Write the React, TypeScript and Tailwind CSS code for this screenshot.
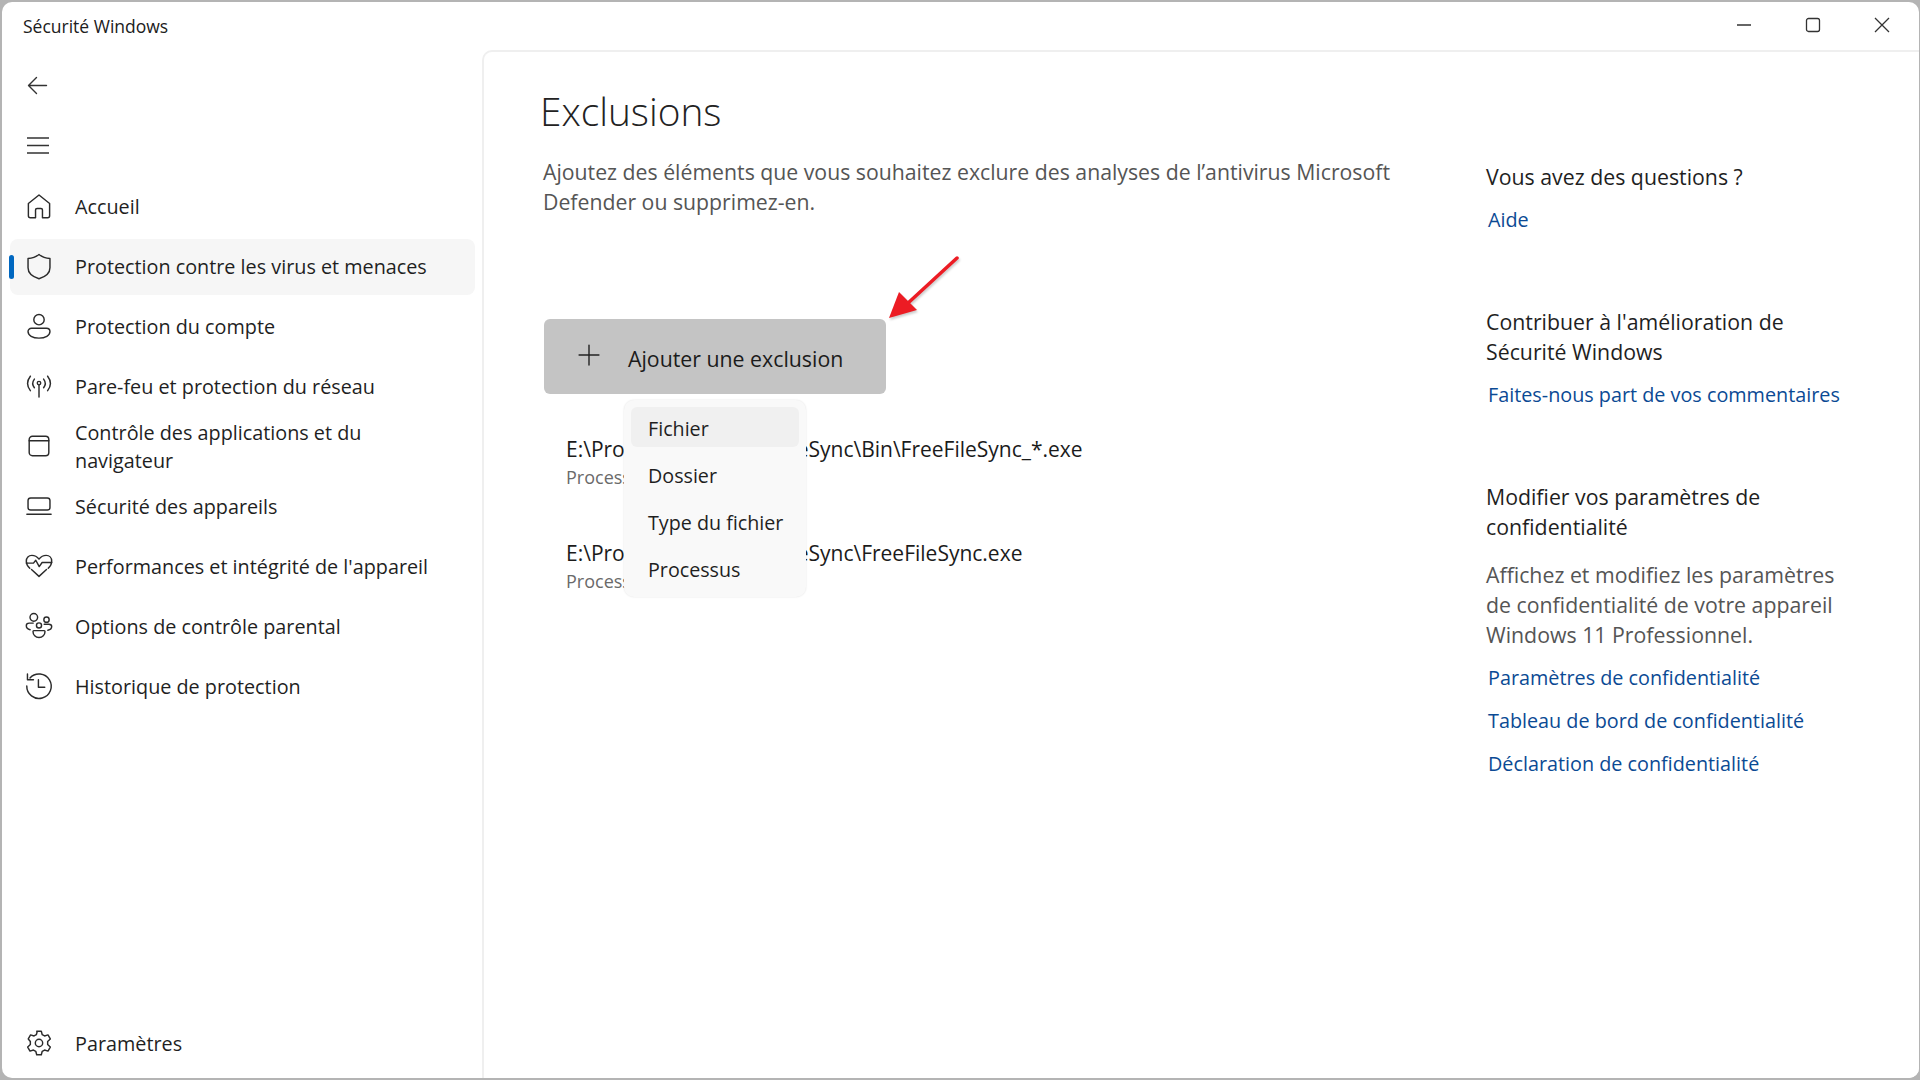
import { Plus } from "lucide-react";

const stroke = { fill: "none", stroke: "#2b2b2b", strokeWidth: 1.25, strokeLinecap: "round", strokeLinejoin: "round" } as const;

const icons = {
  home: <path d="M13 3.500 3.800 10.800v10.700c0 1 .7 1.700 1.700 1.700H10v-6.700c0-.8.5-1.300 1.300-1.300h3.400c.8 0 1.300.5 1.300 1.300v6.700h4.500c1 0 1.700-.7 1.700-1.700V10.800L13 3.500Z" />,
  shield: (
    <path d="M13 3c2.800 2.200 5.700 3.300 9.500 3.500v8c0 4.500-3 7.500-9.500 9.500-6.500-2-9.500-5-9.500-9.500v-8C7.300 6.300 10.200 5.200 13 3Z" />
  ),
  person: (
    <>
      <circle cx="13" cy="7.500" r="4.500" />
      <path d="M6.500 15h13c1.700 0 3 1.200 3 2.800 0 3.400-4 5.700-9.500 5.700s-9.500-2.300-9.500-5.700c0-1.600 1.300-2.800 3-2.800Z" />
    </>
  ),
  wifi: (
    <>
      <circle cx="13" cy="10.500" r="1.500" />
      <path d="M13 12.500v10" />
      <path d="M9 7c-1.700 2.200-1.700 5.300 0 7.500M17 7c1.700 2.200 1.700 5.300 0 7.500" />
      <path d="M5.500 4.500c-3 3.900-3 8.600 0 12.500M20.500 4.500c3 3.900 3 8.600 0 12.500" />
    </>
  ),
  app: (
    <>
      <rect x="4.500" y="4.500" width="17" height="17" rx="2.800" />
      <path d="M4.500 8.500h17" />
    </>
  ),
  laptop: (
    <>
      <rect x="3.500" y="6" width="19" height="10.500" rx="2.300" />
      <path d="M2.500 20.200h21" />
    </>
  ),
  heart: (
    <>
      <path d="M5 15C2.800 12.800 2 11 2 8.800 2 5.800 4 3.800 6.800 3.800c2.500 0 4.600 1.200 6.200 3.200 1.600-2 3.700-3.200 6.200-3.200C22 3.800 24 5.800 24 8.800c0 2.200-.8 4-3 6.200" />
      <path d="M2 10.500h6.200l2-2.500 3 5.500 2.500-3.500H24" />
      <path d="m6.500 16 6.500 6 6.500-6" />
    </>
  ),
  family: (
    <>
      <circle cx="8.500" cy="5.500" r="3.300" />
      <circle cx="19.500" cy="7.500" r="2.300" />
      <circle cx="13" cy="12.500" r="2.200" />
      <path d="M8 10.500H4.500c-1.500 0-2.500.9-2.500 2.200 0 1.700 1.200 3 3.300 3.500" />
      <path d="M17.500 11.500h4c1.500 0 2.500.8 2.500 2 0 1.600-1.200 2.800-3.300 3.200" />
      <path d="M8.500 17h9c.4 0 .7.300.7.700 0 3-2.200 5.300-5.200 5.300s-5.200-2.300-5.200-5.300c0-.4.300-.7.700-.7Z" />
    </>
  ),
  history: (
    <>
      <path d="M5.200 6A10.600 10.600 0 1 1 2.400 13" />
      <path d="M3 2.500V7.500h5.200" />
      <path d="M12.500 7.500V14H18" />
    </>
  ),
  gear: (
    <>
      <circle cx="13" cy="13" r="3.200" />
      <path d="M11 2.800h4l.8 3 2 1.100 3-.9 2 3.500-2.300 2.200v2.600l2.300 2.200-2 3.500-3-.9-2 1.100-.8 3h-4l-.8-3-2-1.100-3 .9-2-3.500 2.300-2.200v-2.600L3.700 9.500l2-3.500 3 .9 2-1.100.8-3Z" />
    </>
  ),
};

function NavIcon({ name }: { name: keyof typeof icons }) {
  return (
    <svg width="30" height="30" viewBox="0 0 26 26" {...stroke} className="shrink-0 -translate-y-px">
      {icons[name]}
    </svg>
  );
}

function NavItem({ icon, label, active }: { icon: keyof typeof icons; label: React.ReactNode; active?: boolean }) {
  return (
    <div className={`relative flex h-[56px] items-center gap-[21px] pl-[14px] rounded-lg mr-[7px] ml-[8px] ${active ? "bg-[#f6f6f6]" : ""}`}>
      {active && <div className="absolute -left-px top-[16px] h-[24px] w-[5px] rounded-full bg-[#0067c0]" />}
      <NavIcon name={icon} />
      <span className="text-[19.8px] leading-[28px] text-[#1f1f1f]">{label}</span>
    </div>
  );
}

function ExclusionRow({ path }: { path: string }) {
  return (
    <div className="flex flex-col">
      <span className="text-[21px] leading-[28px] text-[#1b1b1b] whitespace-pre">{path}</span>
      <span className="text-[18px] leading-[28px] text-[#6a6a6a]">Processus</span>
    </div>
  );
}

function Side({ children, className = "" }: { children: React.ReactNode; className?: string }) {
  return <div className={`text-[21.3px] leading-[30px] text-[#1f1f1f] ${className}`}>{children}</div>;
}

function SideLink({ children, className = "" }: { children: React.ReactNode; className?: string }) {
  return <div className={`text-[19.8px] leading-[43px] text-[#0b4a94] pl-[2px] ${className}`}>{children}</div>;
}

export default function App() {
  return (
    <div className="h-screen w-screen overflow-hidden bg-[#b4b4b4] font-['Open_Sans',sans-serif] pt-[2px] pl-[2px] pr-[1px] pb-[2px]">
      <div className="flex h-full flex-col overflow-hidden rounded-[10px] bg-white">
        {/* Title bar */}
        <div className="flex h-[48px] shrink-0 items-center justify-between pl-[21px] pr-[29px]">
          <span className="text-[17.5px] text-[#202020]">Sécurité Windows</span>
          <div className="flex -translate-y-px items-center gap-[53px]">
            <svg width="16" height="16" viewBox="0 0 16 16" fill="none" stroke="#333" strokeWidth="1.300"><path d="M1 8h14" /></svg>
            <svg width="16" height="16" viewBox="0 0 16 16" fill="none" stroke="#333" strokeWidth="1.300"><rect x="1.500" y="1.500" width="13" height="13" rx="2" /></svg>
            <svg width="16" height="16" viewBox="0 0 16 16" fill="none" stroke="#333" strokeWidth="1.300"><path d="m1 1 14 14M15 1 1 15" /></svg>
          </div>
        </div>

        <div className="flex min-h-0 flex-1">
          {/* Sidebar */}
          <aside className="flex w-[480px] shrink-0 flex-col pt-[5px]">
            <div className="flex h-[60px] items-center pl-[24px]">
              <svg width="24" height="24" viewBox="0 0 24 24" fill="none" stroke="#333" strokeWidth="1.400" strokeLinecap="round" strokeLinejoin="round"><path d="M3.500 12.500h17M10.500 4.500l-8 8 8 8" /></svg>
            </div>
            <div className="flex h-[60px] items-center pl-[24px]">
              <svg width="24" height="24" viewBox="0 0 24 24" fill="none" stroke="#333" strokeWidth="1.400"><path d="M1 5h22M1 12.500h22M1 20h22" /></svg>
            </div>
            <div className="mt-[4px] flex flex-col gap-[4px]">
              <NavItem icon="home" label="Accueil" />
              <NavItem icon="shield" label="Protection contre les virus et menaces" active />
              <NavItem icon="person" label="Protection du compte" />
              <NavItem icon="wifi" label="Pare-feu et protection du réseau" />
              <NavItem icon="app" label={<>Contrôle des applications et du<br />navigateur</>} />
              <NavItem icon="laptop" label="Sécurité des appareils" />
              <NavItem icon="heart" label="Performances et intégrité de l'appareil" />
              <NavItem icon="family" label="Options de contrôle parental" />
              <NavItem icon="history" label="Historique de protection" />
            </div>
            <div className="mt-auto mb-[6px]">
              <NavItem icon="gear" label="Paramètres" />
            </div>
          </aside>

          {/* Main panel */}
          <main className="relative flex flex-1 rounded-tl-[10px] border-l-2 border-t-2 border-[#efefef] bg-white">
            <div className="w-[1000px] shrink-0 pl-[56px]">
              <h1 className="mt-[31px] text-[38.8px] leading-[56px] font-light text-[#222]">Exclusions</h1>
              <p className="mt-[18px] ml-[3px] w-[900px] text-[21.25px] leading-[30px] text-[#555]">
                Ajoutez des éléments que vous souhaitez exclure des analyses de l’antivirus Microsoft<br />Defender ou supprimez-en.
              </p>
              <button className="mt-[102px] ml-[4px] flex h-[75px] w-[342px] items-center gap-[22px] rounded-md bg-[#c4c4c4] pl-[28px]">
                <Plus size={34} strokeWidth={1} color="#222" className="mb-[4px]" />
                <span className="pt-[4px] text-[21.3px] text-[#1b1b1b]">Ajouter une exclusion</span>
              </button>
              <div className="ml-[26px] mt-[41px] flex flex-col gap-[48px]">
                <ExclusionRow path="E:\Program Files\FreeFileSync\Bin\FreeFileSync_*.exe" />
                <ExclusionRow path="E:\Program Files\FreeFileSync\FreeFileSync.exe" />
              </div>
            </div>

            <div className="flex-1 pl-[2px]">
              <Side className="mt-[110px]">Vous avez des questions ?</Side>
              <SideLink className="mt-[6px]">Aide</SideLink>
              <Side className="mt-[66px]">Contribuer à l'amélioration de<br />Sécurité Windows</Side>
              <SideLink className="mt-[6px]">Faites-nous part de vos commentaires</SideLink>
              <Side className="mt-[66px]">Modifier vos paramètres de<br />confidentialité</Side>
              <Side className="mt-[18px] text-[#555]">Affichez et modifiez les paramètres<br />de confidentialité de votre appareil<br />Windows 11 Professionnel.</Side>
              <SideLink className="mt-[6px]">Paramètres de confidentialité</SideLink>
              <SideLink>Tableau de bord de confidentialité</SideLink>
              <SideLink>Déclaration de confidentialité</SideLink>
            </div>

            {/* Flyout menu */}
            <div className="absolute left-[140px] top-[348px] flex w-[182px] flex-col gap-[7px] rounded-[10px] bg-[#f9f9f9] pt-[7px] pr-[7px] pb-[9px] pl-[7px] shadow-[0_0_2px_rgba(0,0,0,0.12)]">
              {["Fichier", "Dossier", "Type du fichier", "Processus"].map((t, i) => (
                <div key={t} className={`flex h-[40px] items-center rounded-md pl-[17px] pt-[4px] text-[19.7px] text-[#1f1f1f] ${i === 0 ? "bg-[#f0f0f0]" : ""}`}>
                  {t}
                </div>
              ))}
            </div>

            {/* Red annotation arrow */}
            <svg className="absolute left-[403px] top-[202px] drop-shadow-[1px_2px_1px_rgba(0,0,0,0.2)]" width="80" height="70" viewBox="0 0 80 70">
              <path d="M70 4 20 50" stroke="#ec1c24" strokeWidth="3.500" strokeLinecap="round" />
              <path d="M2 64 12 38 30 56Z" fill="#ec1c24" />
            </svg>
          </main>
        </div>
      </div>
    </div>
  );
}
